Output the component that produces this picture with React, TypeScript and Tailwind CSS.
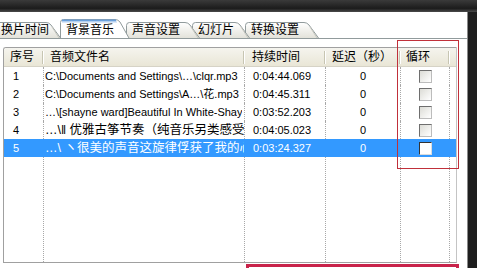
import React from 'react';

type TabDef = { label: string; w: number; sel?: boolean; cls: string };

const tabs: TabDef[] = [
  { label: '换片时间', w: 66, cls: 'ml-[-5px] w-[66px] z-[5] pl-[6px]' },
  { label: '背景音乐', w: 70, sel: true, cls: 'ml-[-1px] w-[70px] z-[9] pl-[6px]' },
  { label: '声音设置', w: 74, cls: 'ml-[-4px] w-[74px] z-[4] pl-[6px]' },
  { label: '幻灯片', w: 58, cls: 'ml-[-8px] w-[58px] z-[3] pl-[6px]' },
  { label: '转换设置', w: 74, cls: 'ml-[-5px] w-[74px] z-[2] pl-[6px]' },
];

const rows = [
  { n: '1', f: 'C:\\Documents and Settings\\…\\clqr.mp3', t: '0:04:44.069' },
  { n: '2', f: 'C:\\Documents and Settings\\A…\\花.mp3', t: '0:04:45.311' },
  { n: '3', f: '…\\[shayne ward]Beautiful In White-Shay', t: '0:03:52.203' },
  { n: '4', f: '…\\‖ 优雅古筝节奏（纯音乐另类感受', t: '0:04:05.023', big: true },
  { n: '5', f: '…\\ ヽ很美的声音这旋律俘获了我的心', t: '0:03:24.327', sel: true, big: true },
];

const Tab = ({ t, i }: { t: TabDef; i: number }) => {
  const h = t.sel ? 20 : 16;
  const w = t.w;
  const fill = `M0.5 ${h} V3.5 Q0.5 0.5 3.5 0.5 H${w - 15} Q${w - 12} 0.5 ${w - 10} 3 L${w - 0.5} ${h} Z`;
  const stroke = `M0.5 ${h} V3.5 Q0.5 0.5 3.5 0.5 H${w - 15} Q${w - 12} 0.5 ${w - 10} 3 L${w - 0.5} ${h}`;
  return (
    <div className={`relative shrink-0 flex items-center ${t.cls} ${t.sel ? 'h-[20px] -mb-px pt-[1px]' : 'h-[16px]'}`}>
      <svg className="absolute inset-0" width={w} height={h}>
        <defs>
          <linearGradient id={`tg${i}`} x1="0" y1="0" x2="0" y2="1">
            <stop offset="0" stopColor="#ffffff" />
            <stop offset="1" stopColor={t.sel ? '#ffffff' : '#e3e2da'} />
          </linearGradient>
        </defs>
        <path d={fill} fill={`url(#tg${i})`} />
        <path d={stroke} fill="none" stroke="#919b9c" />
        {!t.sel && <path d={`M${w - 9} 5 L${w - 2} ${h}`} stroke="#c9c8c0" />}
        {t.sel && <path d={`M2 1.5 H${w - 14}`} stroke="#6aa0dc" strokeWidth="2" />}
        {t.sel && <path d={`M2 3 H${w - 13}`} stroke="#b5d0f0" strokeWidth="1" />}
      </svg>
      <span className="relative text-[12px] leading-none text-black">{t.label}</span>
    </div>
  );
};

const Check = ({ sel }: { sel?: boolean }) => (
  <span
    className={`block w-[13px] h-[13px] border ${
      sel
        ? 'border-t-[#333333] border-l-[#333333] border-r-[#dcdcdc] border-b-[#dcdcdc] bg-white'
        : 'border-t-[#6e6e6e] border-l-[#6e6e6e] border-r-[#bcbcbc] border-b-[#bcbcbc] bg-[linear-gradient(135deg,#dcdcd6,#ffffff)]'
    }`}
  />
);

const Sep = () => <span className="block w-[2px] h-[13px] border-l border-[#c7c5b2] border-r border-r-white" />;

export default function App() {
  const line = 'border-r border-dotted border-[#a8a8a8]';
  return (
    <div className="relative w-[477px] h-[268px] overflow-hidden bg-white flex flex-col font-['Liberation_Sans','Noto_Sans_CJK_SC',sans-serif]">
      <div className="h-[12px] shrink-0 bg-[linear-gradient(to_bottom,#3a3a3a,#1c1c1c_70%,#4a4a4a)]" />
      <div className="flex-1 flex min-h-0">
        <div className="flex-1 flex flex-col border-r border-[#8a8a8a] min-w-0">
          {/* tab strip */}
          <div className="h-[27px] shrink-0 flex items-end border-b border-[#919b9c] overflow-hidden">
            {tabs.map((t, i) => (
              <Tab key={t.label} t={t} i={i} />
            ))}
          </div>

          {/* page */}
          <div className="flex-1 pl-[3px] pt-[8px]">
            <div className="w-[454px] h-[216px] border border-[#a0a0a0] border-r-[#c4c4c4] rounded-tl-[3px] flex flex-col overflow-hidden">
              <div className="h-[19px] shrink-0 flex text-[12px] text-black bg-[linear-gradient(to_bottom,#f5f4ee,#e9e6d6)] border-b border-[#d6d3c6]">
                <div className="w-[40px] flex items-center justify-between pl-[6px]">
                  <span>序号</span>
                  <Sep />
                </div>
                <div className="w-[201px] flex items-center justify-between pl-[6px]">
                  <span>音频文件名</span>
                  <Sep />
                </div>
                <div className="w-[81px] flex items-center justify-between pl-[7px]">
                  <span>持续时间</span>
                  <Sep />
                </div>
                <div className="w-[75px] flex items-center justify-between pl-[6px]">
                  <span>延迟（秒）</span>
                  <Sep />
                </div>
                <div className="w-[49px] flex items-center justify-between pl-[5px]">
                  <span>循环</span>
                  <Sep />
                </div>
                <div className="flex-1" />
              </div>

              <div className="flex-1 flex flex-col text-[11px]">
                {rows.map((r) => {
                  const c = r.sel ? 'border-r border-solid border-[#3399ff]' : line;
                  return (
                    <div key={r.n} className={`h-[18px] shrink-0 flex items-center ${r.sel ? 'bg-[#3399ff] text-white' : 'text-black'}`}>
                      <div className={`w-[40px] h-full flex items-center pl-[9px] ${c}`}>{r.n}</div>
                      <div className={`w-[201px] h-full flex items-center pl-[1px] overflow-hidden whitespace-nowrap ${r.big ? 'text-[12.5px]' : ''} ${c}`}>
                        <span className="block overflow-hidden">{r.f}</span>
                      </div>
                      <div className={`w-[81px] h-full flex items-center pl-[8px] ${c}`}>{r.t}</div>
                      <div className={`w-[75px] h-full flex items-center justify-center ${c}`}>0</div>
                      <div className={`w-[49px] h-full flex items-center justify-center ${c}`}>
                        <Check sel={r.sel} />
                      </div>
                      <div className="flex-1" />
                    </div>
                  );
                })}
                <div className="flex-1 flex">
                  <div className={`w-[40px] ${line}`} />
                  <div className={`w-[201px] ${line}`} />
                  <div className={`w-[81px] ${line}`} />
                  <div className={`w-[75px] ${line}`} />
                  <div className={`w-[49px] ${line}`} />
                </div>
              </div>
            </div>
          </div>
        </div>
        <div className="w-[9px] shrink-0 bg-[#1e1e1e]" />
      </div>

      {/* red annotation boxes */}
      <div className="absolute left-[397px] top-[40px] w-[62px] h-[129px] border border-[#c0303a]" />
      <div className="absolute left-[246px] top-[264px] w-[213px] h-[12px] border-[3px] border-[#c8234a]" />
    </div>
  );
}
